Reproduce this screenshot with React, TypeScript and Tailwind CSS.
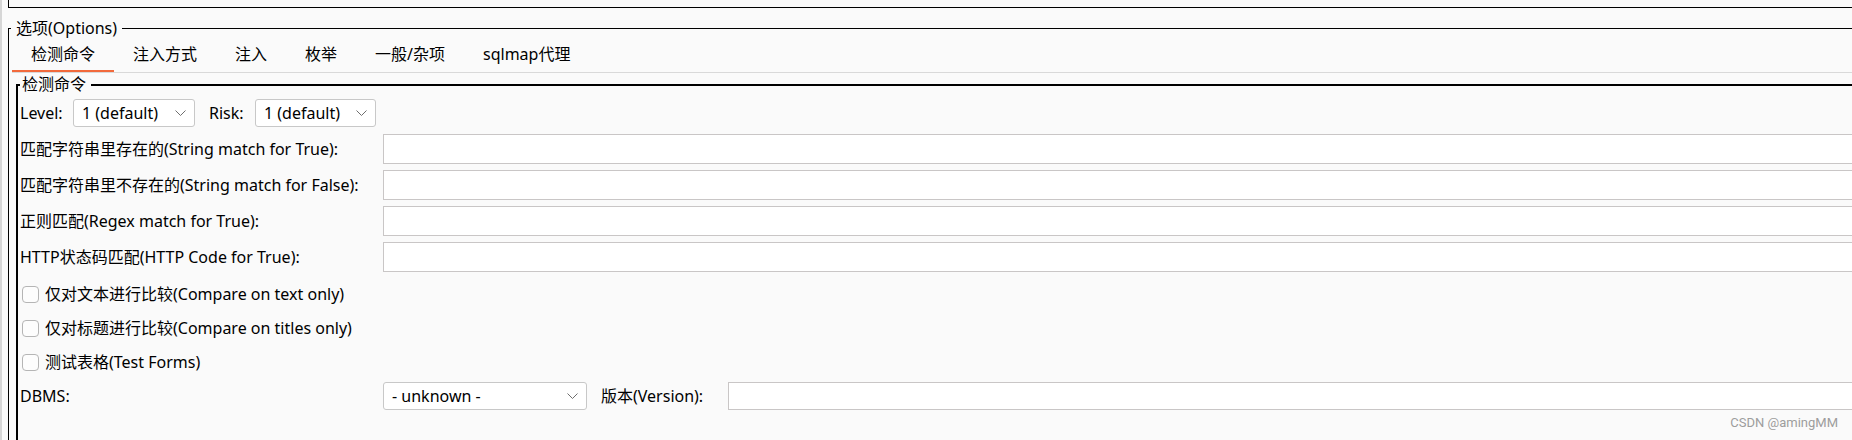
import React from "react";

function Chevron() {
  return (
    <svg width="11" height="6" viewBox="0 0 11 6" className="shrink-0">
      <path d="M0.5 0.5 L5.5 5.5 L10.5 0.5" fill="none" stroke="#6e6e6e" strokeWidth="1" />
    </svg>
  );
}

function Select({ className, text }: { className: string; text: string }) {
  return (
    <div
      className={`flex h-[28px] shrink-0 items-center justify-between rounded-[3px] border border-[#c8c8c8] bg-white pl-[8px] pr-[8px] ${className}`}
    >
      <span>{text}</span>
      <Chevron />
    </div>
  );
}

function TextRow({ label }: { label: string }) {
  return (
    <div className="flex h-[30px] items-center">
      <div className="w-[363px] shrink-0 whitespace-nowrap">{label}</div>
      <div className="h-full flex-1 border border-r-0 border-[#c9c6c6] bg-white" />
    </div>
  );
}

function CheckRow({ label }: { label: string }) {
  return (
    <div className="flex h-[34px] items-center">
      <div className="ml-[2px] h-[17px] w-[17px] shrink-0 rounded-[4px] border border-[#b5b5b5] bg-[#fdfdfd]" />
      <span className="ml-[6px] whitespace-nowrap">{label}</span>
    </div>
  );
}

export default function App() {
  const tabs = ["检测命令", "注入方式", "注入", "枚举", "一般/杂项", "sqlmap代理"];
  return (
    <div className="flex h-[440px] w-[1852px] overflow-hidden bg-[#fafafa] font-['Noto_Sans','Noto_Sans_CJK_SC',sans-serif] text-[16px] text-black">
      <div className="w-[2px] shrink-0 bg-[#d6d6d6]" />
      <div className="flex flex-1 flex-col pl-[6px]">
        {/* top box remnant */}
        <div className="h-[8px] shrink-0 border-b border-l border-black" />

        {/* Options group */}
        <div className="mt-[12px] flex flex-1 flex-col">
          <div className="flex h-[17px] items-stretch">
            <div className="h-[9px] w-[3px] self-end border-l border-t border-black" />
            <span className="whitespace-nowrap pl-[5px] pr-[5px] leading-[17px]">选项(Options)</span>
            <div className="h-[9px] flex-1 self-end border-t border-black" />
          </div>
          <div className="flex flex-1 flex-col border-l border-black pl-[3px] pt-[1px]">
            {/* tabs */}
            <div className="flex border-b border-[#d9d9d9]">
              {tabs.map((t, i) => (
                <div
                  key={t}
                  className={`flex h-[34px] items-center whitespace-nowrap border-b-2 px-[19px] ${
                    i === 0 ? "border-[#f26a3c]" : "border-transparent"
                  }`}
                >
                  {t}
                </div>
              ))}
            </div>

            {/* inner group */}
            <div className="ml-[4px] mt-[3px] flex flex-1 flex-col">
              <div className="flex h-[17px] items-stretch">
                <div className="h-[9px] w-[4px] self-end border-l-2 border-t-2 border-black" />
                <span className="whitespace-nowrap pl-[2px] pr-[5px] leading-[17px]">检测命令</span>
                <div className="h-[9px] flex-1 self-end border-t-2 border-black" />
              </div>
              <div className="flex flex-1 flex-col border-l-2 border-black pl-[2px]">
                {/* level / risk */}
                <div className="mt-[6px] flex h-[28px] items-center">
                  <span className="w-[53px] shrink-0">Level:</span>
                  <Select className="w-[122px]" text="1 (default)" />
                  <span className="ml-[14px] w-[46px] shrink-0">Risk:</span>
                  <Select className="w-[121px]" text="1 (default)" />
                </div>

                <div className="mt-[7px] flex flex-col gap-[6px]">
                  <TextRow label="匹配字符串里存在的(String match for True):" />
                  <TextRow label="匹配字符串里不存在的(String match for False):" />
                  <TextRow label="正则匹配(Regex match for True):" />
                  <TextRow label="HTTP状态码匹配(HTTP Code for True):" />
                </div>

                <div className="mt-[5px] flex flex-col">
                  <CheckRow label="仅对文本进行比较(Compare on text only)" />
                  <CheckRow label="仅对标题进行比较(Compare on titles only)" />
                  <CheckRow label="测试表格(Test Forms)" />
                </div>

                <div className="mt-[3px] flex h-[28px] items-center">
                  <span className="w-[363px] shrink-0">DBMS:</span>
                  <Select className="w-[204px]" text="- unknown -" />
                  <span className="ml-[14px] w-[127px] shrink-0 whitespace-nowrap">版本(Version):</span>
                  <div className="h-full flex-1 border border-r-0 border-[#c9c6c6] bg-white" />
                </div>

                <div className="mt-[5px] flex justify-end pr-[14px]">
                  <span className="font-['Roboto',sans-serif] text-[13px] leading-[16px] text-[#9d9d9d]">CSDN @amingMM</span>
                </div>
              </div>
            </div>
          </div>
        </div>
      </div>
    </div>
  );
}
